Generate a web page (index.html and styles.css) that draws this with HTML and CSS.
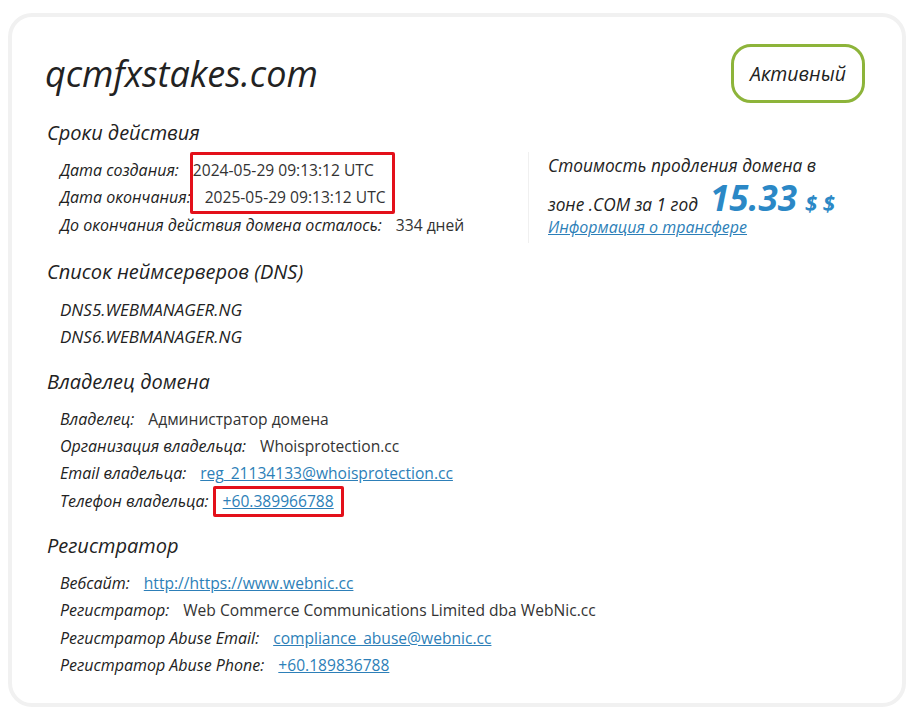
FILE: index.html
```html
<!DOCTYPE html>
<html lang="ru">
<head>
<meta charset="utf-8">
<title>qcmfxstakes.com</title>
<link rel="stylesheet" href="styles.css">
</head>
<body>
<div class="card">
  <div class="header">
    <h1 class="domain">qcmfxstakes.com</h1>
    <div class="badge">Активный</div>
  </div>

  <section class="section first">
    <h2 class="heading">Сроки действия</h2>
    <div class="split">
      <div class="rows dates">
        <div class="row"><span class="label">Дата создания:</span><span class="value">2024-05-29 09:13:12 UTC</span></div>
        <div class="row"><span class="label">Дата окончания:</span><span class="value">2025-05-29 09:13:12 UTC</span></div>
        <div class="row"><span class="label">До окончания действия домена осталось:</span><span class="value">334 дней</span></div>
        <div class="mark mark-dates"></div>
      </div>
      <div class="price">
        <div class="price-line">Стоимость продления домена в</div>
        <div class="price-line second"><span>зоне .COM за 1 год</span><span class="amount">15.33</span><span class="cur">$ $</span></div>
        <a class="transfer" href="#">Информация о трансфере</a>
      </div>
    </div>
  </section>

  <section class="section dns-section">
    <h2 class="heading">Список неймсерверов (DNS)</h2>
    <div class="rows">
      <div class="row dns">DNS5.WEBMANAGER.NG</div>
      <div class="row dns">DNS6.WEBMANAGER.NG</div>
    </div>
  </section>

  <section class="section">
    <h2 class="heading">Владелец домена</h2>
    <div class="rows owner">
      <div class="row"><span class="label">Владелец:</span><span class="value">Администратор домена</span></div>
      <div class="row"><span class="label">Организация владельца:</span><span class="value">Whoisprotection.cc</span></div>
      <div class="row"><span class="label">Email владельца:</span><a class="value link" href="#">reg_21134133@whoisprotection.cc</a></div>
      <div class="row"><span class="label">Телефон владельца:</span><span class="boxed"><a class="link" href="#">+60.389966788</a></span></div>
    </div>
  </section>

  <section class="section">
    <h2 class="heading">Регистратор</h2>
    <div class="rows">
      <div class="row"><span class="label">Вебсайт:</span><a class="value link" href="#">http://https://www.webnic.cc</a></div>
      <div class="row"><span class="label">Регистратор:</span><span class="value">Web Commerce Communications Limited dba WebNic.cc</span></div>
      <div class="row"><span class="label">Регистратор Abuse Email:</span><a class="value link" href="#">compliance_abuse@webnic.cc</a></div>
      <div class="row"><span class="label">Регистратор Abuse Phone:</span><a class="value link" href="#">+60.189836788</a></div>
    </div>
  </section>
</div>
</body>
</html>
```

FILE: styles.css
```css
* { box-sizing: border-box; }
html, body { margin: 0; padding: 0; background: #ffffff; }
body {
  font-family: "Open Sans", "Liberation Sans", sans-serif;
  color: #222;
}
.card {
  margin: 13px 8px 11px 8px;
  height: 694px;
  border: 4px solid #f1f1f1;
  border-radius: 24px;
  padding: 27px 37px 0 35px;
}
.header {
  display: flex;
  justify-content: space-between;
  align-items: center;
}
.domain {
  margin: 0 0 0 -2px;
  font-size: 36px;
  font-weight: 400;
  font-style: italic;
  color: #222;
  line-height: 42px;
}
.badge {
  width: 134px;
  height: 59px;
  border: 3px solid #8db43a;
  border-radius: 20px;
  display: flex;
  align-items: center;
  justify-content: center;
  font-style: italic;
  font-size: 19.5px;
  color: #222;
}
.section { margin-top: 17px; }
.section.first { margin-top: 16px; }
.section.dns-section { margin-top: 19px; }
.heading {
  margin: 0 0 10px 0;
  font-size: 20px;
  font-weight: 400;
  font-style: italic;
  line-height: 28px;
  color: #222;
}
.split { display: flex; align-items: flex-start; }
.rows {
  padding-left: 13px;
  position: relative;
}
.dates { width: 481px; }
.row {
  display: flex;
  align-items: center;
  height: 27.33px;
  line-height: 27.33px;
  white-space: nowrap;
}
.label {
  font-style: italic;
  font-weight: 500;
  font-size: 16px;
  color: #222;
}
.value {
  margin-left: 14px;
  color: #333;
  font-size: 15.6px;
}
.link { color: #2d7fb8; text-decoration: underline; }
.dns { font-style: italic; font-weight: 500; font-size: 17px; }
.mark {
  position: absolute;
  border: 3px solid #e3101a;
  border-radius: 2px;
}
.mark-dates {
  left: 143px;
  top: -5px;
  width: 205px;
  height: 62px;
}
.boxed {
  display: inline-block;
  margin-left: 4px;
  padding: 0 7px;
  border: 3px solid #e3101a;
  border-radius: 2px;
  line-height: 25px;
  height: 31px;
  font-size: 15.6px;
}
.price {
  border-left: 1px solid #f0f0f0;
  padding: 0 0 0 19px;
  margin-top: -5px;
  margin-bottom: -10px;
  height: 91px;
  font-style: italic;
  font-size: 17.3px;
  color: #222;
}
.price-line { line-height: 28px; height: 28px; }
.price-line.second {
  display: flex;
  align-items: baseline;
  height: 36px;
  line-height: 36px;
}
.amount {
  font-size: 35px;
  font-weight: 700;
  color: #2b88c6;
  margin-left: 12px;
  line-height: 36px;
}
.cur {
  font-size: 22px;
  font-weight: 700;
  color: #2b88c6;
  margin-left: 8px;
  line-height: 36px;
}
.transfer {
  display: block;
  color: #2d7fb8;
  font-size: 16px;
  line-height: 22px;
  text-decoration: underline;
}
```
